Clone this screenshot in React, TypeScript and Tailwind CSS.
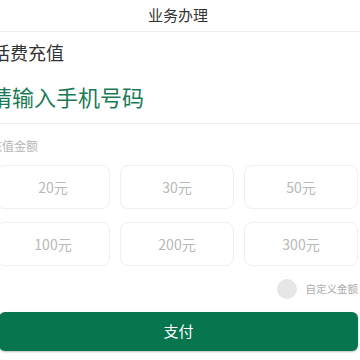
export default function App() {
  const amounts = ["20元", "30元", "50元", "100元", "200元", "300元"];

  return (
    <div className="w-[360px] h-[360px] overflow-hidden bg-white font-['Noto_Sans_CJK_SC','Noto_Sans',sans-serif]">
      <div className="h-8 flex items-center justify-center border-b border-[#ececec] text-[15px] text-[#333] pr-1">
        业务办理
      </div>

      <div className="ml-[-8px] mt-2 text-[18px] leading-6 text-[#333]">话费充值</div>

      <div className="border-b border-[#ececec] pb-3">
        <div className="ml-[-10px] mt-[17px] text-[22px] leading-[30px] text-[#1a7a56]">请输入手机号码</div>
      </div>

      <div className="ml-[-10px] mt-[14px] text-[12px] leading-4 text-[#b5b5b5]">充值金额</div>

      <div className="ml-[-4px] mr-[2px] mt-[11px] grid grid-cols-3 gap-x-[10px] gap-y-[13px]">
        {amounts.map((a) => (
          <div
            key={a}
            className="h-[44px] rounded-lg border border-[#efefef] flex items-center justify-center text-[14px] text-[#b8b8b8]"
          >
            {a}
          </div>
        ))}
      </div>

      <div className="mt-[13px] flex items-center justify-end gap-[9px] pr-[2px]">
        <div className="w-5 h-5 rounded-full bg-[#e6e6e6]"></div>
        <div className="text-[10.5px] text-[#aaa]">自定义金额</div>
      </div>

      <div className="mt-[13px] ml-[-1px] mr-[2px]">
        <button className="w-full h-[39px] rounded-md bg-[#07754e] text-white text-[15px] shadow-[0_1px_2px_rgba(0,0,0,0.25)]">
          支付
        </button>
      </div>
    </div>
  );
}
